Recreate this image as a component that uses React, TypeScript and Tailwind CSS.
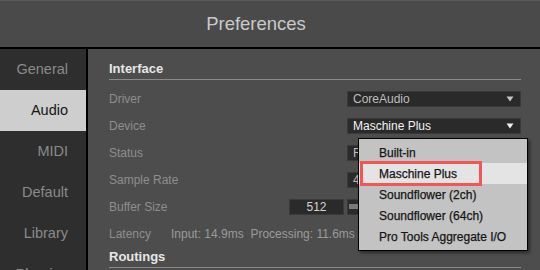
import React from "react";

const F = { fontFamily: '"Liberation Sans", Arial, sans-serif' };

function Arrow({ color = "#d0d0d0" }: { color?: string }) {
  return (
    <svg width="8" height="6" viewBox="0 0 8 6" className="shrink-0">
      <path d="M0.5 0.5 L7.5 0.5 L4 5.5 Z" fill={color} />
    </svg>
  );
}

function Row({ label, children }: { label: string; children?: React.ReactNode }) {
  return (
    <div className="flex h-[27px] items-center">
      <div className="w-[62px] shrink-0 whitespace-nowrap text-[12px] text-[#8d8d8d]">{label}</div>
      <div className="flex flex-1 items-center justify-end">{children}</div>
    </div>
  );
}

export default function App() {
  const side = ["General", "Audio", "MIDI", "Default", "Library", "Plug-ins"];
  const items = ["Built-in", "Maschine Plus", "Soundflower (2ch)", "Soundflower (64ch)", "Pro Tools Aggregate I/O"];
  return (
    <div style={F} className="relative h-[270px] w-[540px] overflow-hidden bg-[#4d4d4d]">
      <div className="flex h-[49px] items-center justify-center border-t border-t-[#5a5a5a] border-b-2 border-b-black bg-[#4a4a4a] pb-[1px] pr-[28px]">
        <span className="text-[18.5px] text-[#c9c9c9]">Preferences</span>
      </div>
      <div className="flex h-[221px]">
        <div className="w-[88px] shrink-0 border-r-2 border-r-black bg-[#2e2e2e]">
          {side.map((s) => (
            <div
              key={s}
              className={
                "flex h-[41px] items-center justify-end pr-[18px] text-[14.5px] " +
                (s === "Audio" ? "bg-[#cecece] text-[#161616]" : "text-[#8a8a8a]")
              }
            >
              {s}
            </div>
          ))}
        </div>
        <div className="flex-1 pl-[21px] pr-[19px] pt-[12px]">
          <div className="border-b border-b-[#8a8a8a] pb-[2px] text-[13px] font-bold leading-[16px] text-[#e6e6e6]">
            Interface
          </div>
          <div className="mt-[5px]">
            <Row label="Driver">
              <div className="flex h-[16px] w-[174px] items-center justify-between border border-[#3a3a3a] bg-[#2a2a2a] pl-[5px] pr-[6px] text-[12px] text-[#bdbdbd]">
                <span>CoreAudio</span>
                <Arrow color="#c4c4c4" />
              </div>
            </Row>
            <Row label="Device">
              <div className="flex h-[16px] w-[174px] items-center justify-between border border-[#3a3a3a] bg-[#2a2a2a] pl-[5px] pr-[6px] text-[12px] text-[#f2f2f2]">
                <span>Maschine Plus</span>
                <Arrow color="#f0f0f0" />
              </div>
            </Row>
            <Row label="Status">
              <div className="flex h-[16px] w-[174px] items-center border border-[#3a3a3a] bg-[#2a2a2a] pl-[5px] text-[12px] text-[#bdbdbd]">
                <span>Running</span>
              </div>
            </Row>
            <Row label="Sample Rate">
              <div className="flex h-[16px] w-[174px] items-center border border-[#3a3a3a] bg-[#2a2a2a] pl-[5px] text-[12px] text-[#bdbdbd]">
                <span>44100</span>
              </div>
            </Row>
            <Row label="Buffer Size">
              <div className="flex items-center gap-[3px]">
                <div className="flex h-[16px] w-[55px] items-center justify-center border border-[#3a3a3a] bg-[#2a2a2a] text-[12px] text-[#d4d4d4]">
                  512
                </div>
                <div className="flex h-[16px] w-[174px] items-center border border-[#3a3a3a] bg-[#2a2a2a] pl-[1px]">
                  <div className="h-[5px] w-[10px] bg-[#7a7a7a]" />
                </div>
              </div>
            </Row>
            <div className="flex h-[27px] items-center text-[12px] text-[#8d8d8d]">
              <div className="w-[62px] shrink-0">Latency</div>
              <div className="whitespace-pre text-[#9a9a9a]">Input: 14.9ms  Processing: 11.6ms</div>
            </div>
          </div>
          <div className="mt-[2px] border-b border-b-[#8a8a8a] pb-[2px] text-[13px] font-bold leading-[16px] text-[#e6e6e6]">
            Routings
          </div>
        </div>
      </div>

      <div className="absolute left-[358px] top-[138px] w-[170px] border border-black bg-[#c3c3c3] py-[3px] shadow-[2px_2px_3px_rgba(0,0,0,0.45)]">
        {items.map((it) => (
          <div
            key={it}
            className={
              "flex h-[21px] items-center pl-[20px] text-[12px] text-[#161616] [-webkit-text-stroke:0.25px_#161616] " +
              (it === "Maschine Plus" ? "bg-[#e4e4e4]" : "")
            }
          >
            {it}
          </div>
        ))}
        <div className="pointer-events-none absolute left-[1px] top-[22px] h-[25px] w-[122px] border-[3px] border-[#f25656]" />
      </div>
    </div>
  );
}
